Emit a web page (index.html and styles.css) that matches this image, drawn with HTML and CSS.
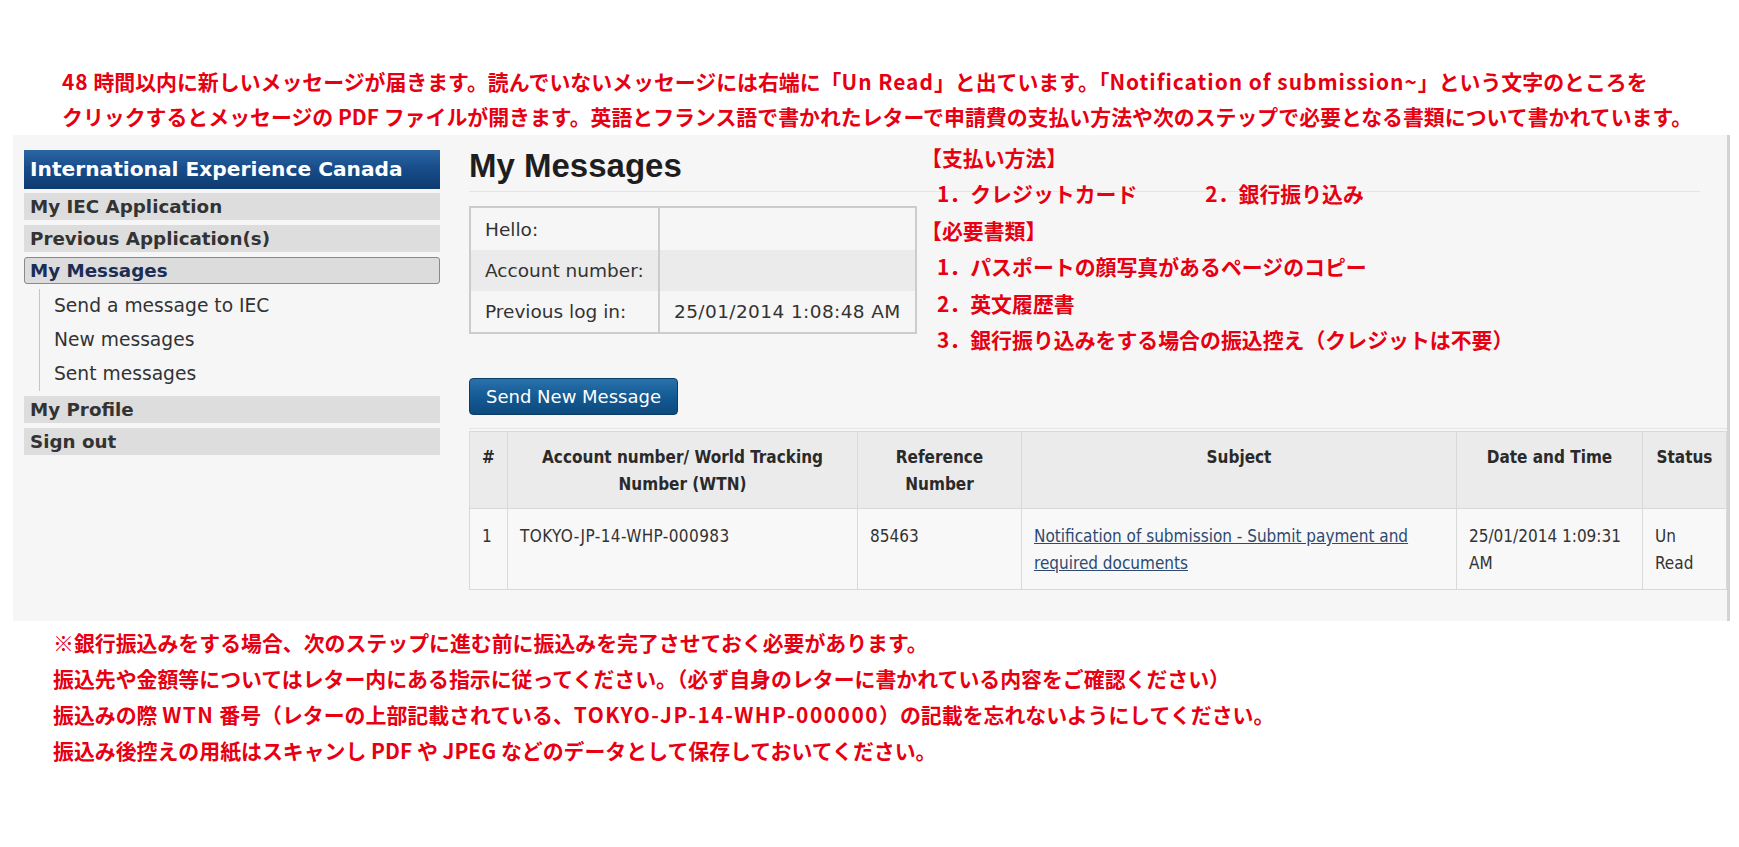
FILE: index.html
```html
<!DOCTYPE html>
<html lang="ja">
<head>
<meta charset="utf-8">
<title>My Messages</title>
<link rel="stylesheet" href="styles.css">
</head>
<body>
<div class="intro">
  <p><span class="en">48</span> 時間以内に新しいメッセージが届きます。読んでいないメッセージには右端に「<span class="en">Un Read</span>」と出ています。「<span class="en">Notification of submission~</span>」という文字のところを</p>
  <p>クリックするとメッセージの PDF ファイルが開きます。英語とフランス語で書かれたレターで申請費の支払い方法や次のステップで必要となる書類について書かれています。</p>
</div>

<div class="panel">
  <nav class="sidebar">
    <div class="sb-title">International Experience Canada</div>
    <ul class="sb-menu">
      <li class="sb-item">My IEC Application</li>
      <li class="sb-item">Previous Application(s)</li>
      <li class="sb-item active">My Messages</li>
      <li class="sb-subwrap">
        <ul class="sb-sub">
          <li>Send a message to IEC</li>
          <li>New messages</li>
          <li>Sent messages</li>
        </ul>
      </li>
      <li class="sb-item">My Profile</li>
      <li class="sb-item">Sign out</li>
    </ul>
  </nav>

  <main class="main">
    <h1 class="title">My Messages</h1>
    <table class="info">
      <tr><td class="lbl">Hello:</td><td class="val"></td></tr>
      <tr class="alt"><td class="lbl">Account number:</td><td class="val"></td></tr>
      <tr><td class="lbl">Previous log in:</td><td class="val">25/01/2014 1:08:48 AM</td></tr>
    </table>
    <button class="btn" type="button">Send New Message</button>
    <div class="msgs-wrap">
      <table class="msgs">
        <colgroup>
          <col class="c-num"><col class="c-acc"><col class="c-ref"><col class="c-sub"><col class="c-date"><col class="c-stat">
        </colgroup>
        <thead>
          <tr>
            <th>#</th>
            <th>Account number/ World Tracking Number (WTN)</th>
            <th>Reference Number</th>
            <th>Subject</th>
            <th>Date and Time</th>
            <th>Status</th>
          </tr>
        </thead>
        <tbody>
          <tr>
            <td>1</td>
            <td class="wtn">TOKYO-JP-14-WHP-000983</td>
            <td>85463</td>
            <td><a href="#">Notification of submission - Submit payment and required documents</a></td>
            <td>25/01/2014 1:09:31 AM</td>
            <td>Un Read</td>
          </tr>
        </tbody>
      </table>
    </div>
  </main>

  <div class="note-box">
    <p>【支払い方法】</p>
    <p class="item">1．クレジットカード<span class="gap">2．銀行振り込み</span></p>
    <p>【必要書類】</p>
    <p class="item">1．パスポートの顔写真があるページのコピー</p>
    <p class="item">2．英文履歴書</p>
    <p class="item">3．銀行振り込みをする場合の振込控え（クレジットは不要）</p>
  </div>
</div>

<div class="notes">
  <p>※銀行振込みをする場合、次のステップに進む前に振込みを完了させておく必要があります。</p>
  <p>振込先や金額等についてはレター内にある指示に従ってください。（必ず自身のレターに書かれている内容をご確認ください）</p>
  <p>振込みの際 <span class="en code">WTN</span> 番号（レターの上部記載されている、<span class="en code">TOKYO-JP-14-WHP-000000</span>）の記載を忘れないようにしてください。</p>
  <p>振込み後控えの用紙はスキャンし PDF や JPEG などのデータとして保存しておいてください。</p>
</div>
</body>
</html>
```

FILE: styles.css
```css
html, body {
  margin: 0;
  padding: 0;
  background: #ffffff;
}

body {
  width: 1739px;
  font-family: "DejaVu Sans", sans-serif;
  color: #333;
}

p { margin: 0; }

/* red annotations */
.intro, .notes, .note-box {
  font-family: "Noto Sans CJK JP", "Noto Sans", sans-serif;
  font-weight: 700;
  font-size: 20.9px;
  color: #e60012;
  white-space: nowrap;
}

.en { letter-spacing: 1px; }
.en.code { letter-spacing: 1.5px; }

.intro {
  padding: 64px 0 0 62px;
  line-height: 35px;
}

.notes {
  padding: 3px 0 0 53px;
  line-height: 36px;
}

/* grey screenshot panel */
.panel {
  position: relative;
  margin: 1px 0 0 13px;
  width: 1714px;
  height: 486px;
  background: #f6f6f6;
  border-right: 3px solid #d3d3d3;
  display: flex;
  align-items: flex-start;
}

.note-box {
  position: absolute;
  left: 908px;
  top: 4px;
  line-height: 36.4px;
}

.note-box .item { padding-left: 16px; }

.note-box .gap { margin-left: 68px; }

/* sidebar */
.sidebar {
  margin-left: 11px;
  padding-top: 15px;
  width: 416px;
  flex: none;
}

.sb-title {
  height: 39px;
  line-height: 39px;
  padding-left: 6px;
  background: linear-gradient(#2b66a3 0%, #184d8b 45%, #0e3b70 100%);
  color: #fff;
  font-weight: 700;
  font-size: 20.2px;
  white-space: nowrap;
}

.sb-menu {
  list-style: none;
  margin: 0;
  padding: 0;
}

.sb-item {
  margin-top: 5px;
  height: 27px;
  line-height: 27px;
  padding-left: 6px;
  background: #dddddd;
  font-weight: 700;
  font-size: 18.3px;
  color: #333;
  box-sizing: border-box;
  white-space: nowrap;
}

.sb-item:first-child { margin-top: 4px; }

.sb-item.active {
  border: 1px solid #8a8a8a;
  border-radius: 3px;
  padding-left: 5px;
  line-height: 25px;
  color: #1b2c55;
  background: #dcdcdc;
}

.sb-subwrap { margin-top: 5px; }

.sb-sub {
  list-style: none;
  margin: 0 0 0 15px;
  padding: 0 0 0 14px;
  border-left: 1px solid #c4c4c4;
}

.sb-sub li {
  height: 34px;
  line-height: 34px;
  font-size: 18.7px;
  color: #333;
}

/* main column */
.main {
  margin-left: 29px;
  padding-top: 11px;
  flex: 1;
  min-width: 0;
}

.title {
  margin: 0 27px 0 0;
  padding-bottom: 5px;
  font-family: "Liberation Sans", Arial, sans-serif;
  font-weight: 700;
  font-size: 33px;
  line-height: 40px;
  color: #1e1e1e;
  border-bottom: 1px solid #e4e4e4;
}

.info {
  margin-top: 14px;
  border-collapse: collapse;
  border: 2px solid #cccccc;
  font-size: 18.5px;
  color: #333;
}

.info td {
  height: 41px;
  padding: 0 14px;
  white-space: nowrap;
}

.info tr:first-child td { height: 42px; }

.info .lbl {
  width: 159px;
  border-right: 2px solid #cccccc;
}

.info .val {
  width: 225px;
  letter-spacing: 0.4px;
}

.info .alt td { background: #ebebeb; }

.btn {
  display: block;
  margin-top: 44px;
  width: 209px;
  height: 37px;
  padding: 0;
  border: 1px solid #0c3d69;
  border-radius: 4px;
  background: linear-gradient(#2a72ad 0%, #145a93 50%, #0d4a7e 100%);
  color: #fff;
  font-family: "DejaVu Sans", sans-serif;
  font-size: 18px;
  cursor: pointer;
}

.msgs-wrap {
  margin-top: 13px;
  padding-top: 2px;
  border-top: 1px solid #e6e6e6;
}

.msgs {
  width: 100%;
  table-layout: fixed;
  border-collapse: collapse;
  font-family: "DejaVu Sans Condensed", "DejaVu Sans", sans-serif;
  font-size: 17px;
  line-height: 27px;
  color: #333;
}

.c-num { width: 38px; }
.c-acc { width: 350px; }
.c-ref { width: 164px; }
.c-sub { width: 435px; }
.c-date { width: 186px; }

.msgs th, .msgs td {
  border: 1px solid #d9d9d9;
  vertical-align: top;
}

.msgs th {
  height: 77px;
  box-sizing: border-box;
  padding: 12px 10px 0;
  background: #ebebeb;
  font-weight: 700;
  text-align: center;
  color: #2a2a2a;
}

.msgs th:first-child { padding: 12px 0 0; }

.msgs td {
  height: 81px;
  box-sizing: border-box;
  padding: 14px 10px 0 12px;
  background: #f8f8f8;
  text-align: left;
}

.msgs td.wtn { letter-spacing: 0.4px; }

.msgs a {
  color: #2c4a72;
  text-decoration: underline;
}
```
